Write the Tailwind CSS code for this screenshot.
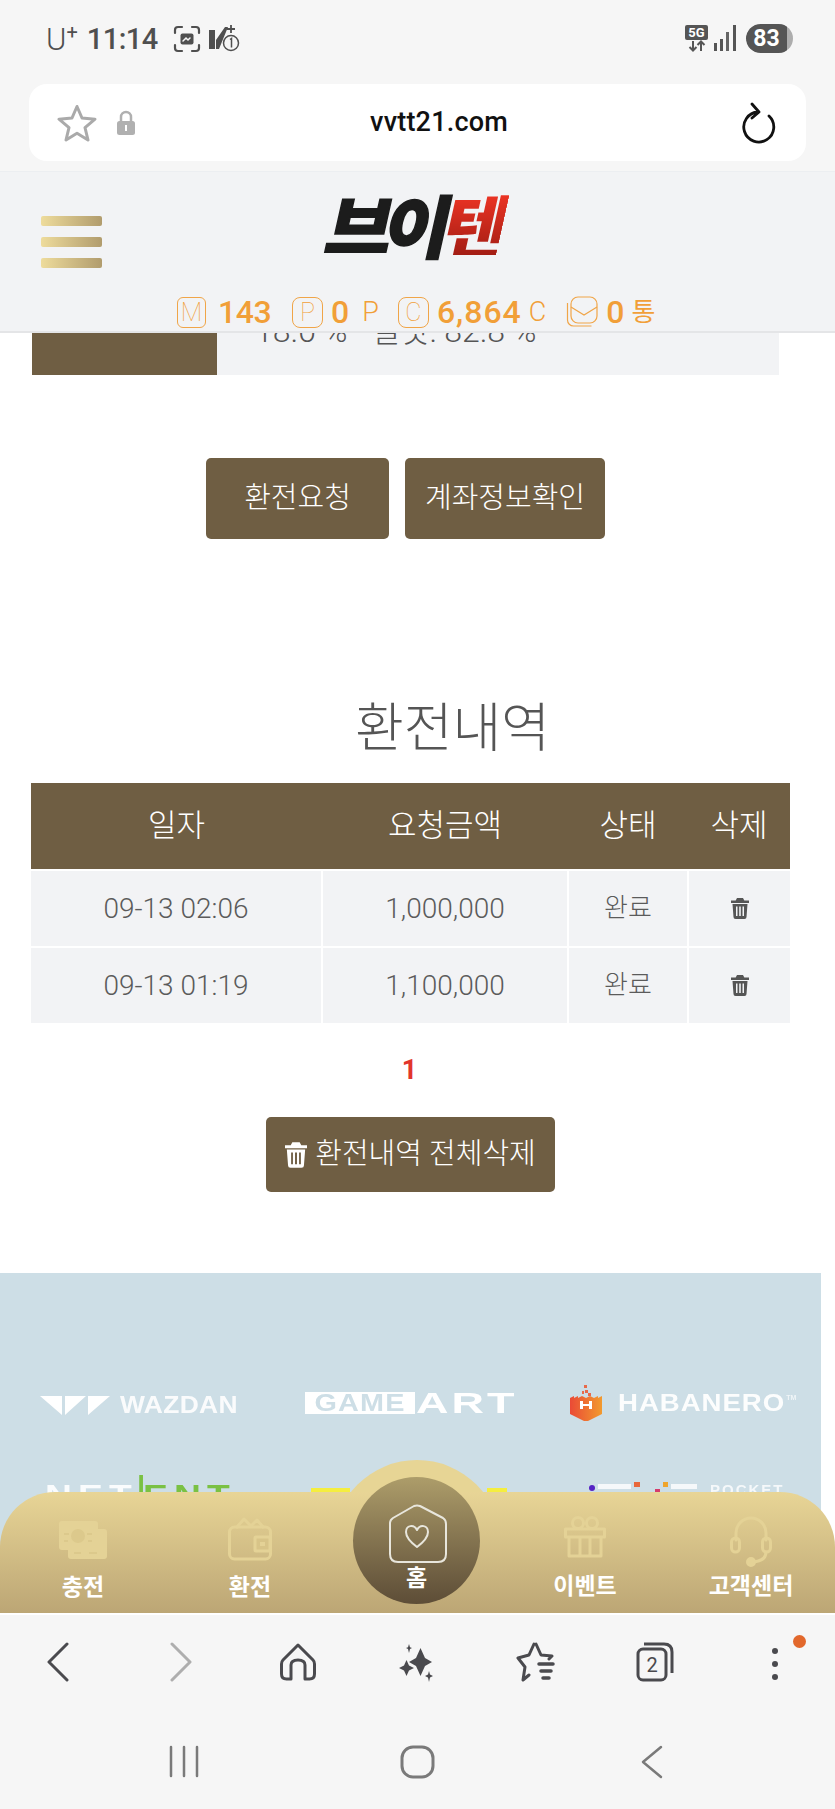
<!DOCTYPE html>
<html lang="ko">
<head>
    <meta charset="UTF-8">
    <meta name="viewport" content="width=device-width, initial-scale=1.0">
    <title>vvtt21.com</title>
    <script src="https://cdn.jsdelivr.net/npm/@tailwindcss/browser@4"></script>
</head>
<body class="bg-white font-['Roboto','Noto_Sans_CJK_KR',sans-serif]">
<div class="w-[835px] h-[1809px] flex flex-col overflow-hidden">

    <!-- Phone status bar + address bar -->
    <div class="h-[171px] shrink-0 bg-[#f6f6f6] flex flex-col">
        <div class="h-[84px] flex items-start justify-between pl-[46px] pr-[42px] pt-[23px] text-[#4f4f4f]">
            <div class="flex items-center h-[32px]">
                <span class="text-[31px] font-light leading-none">U</span>
                <span class="text-[20px] font-normal leading-none -mt-[14px]">+</span>
                <span class="ml-[9px] text-[29px] font-medium leading-none tracking-[-0.5px]">11:14</span>
                <svg class="ml-[15px]" width="28" height="28" viewBox="0 0 28 28" fill="none" stroke="#4f4f4f" stroke-width="2.2" stroke-linecap="round"><path d="M2 8V5a3 3 0 0 1 3-3h4M19 2h4a3 3 0 0 1 3 3v3M26 20v3a3 3 0 0 1-3 3h-4M9 26H5a3 3 0 0 1-3-3v-3"/><rect x="7.5" y="8.500" width="13" height="11" rx="2" fill="#4f4f4f" stroke="none"/><path d="M10 16l3-3 2 2 2-2" stroke="#f6f6f6" stroke-width="1.500"/></svg>
                <svg class="ml-[7px]" width="32" height="30" viewBox="0 0 32 30" fill="none"><path d="M1 6h6v19H1zM8 16L17 3h3L11 25H8z" fill="#4f4f4f"/><path d="M23 1v8M19 5h8" stroke="#4f4f4f" stroke-width="1.800"/><circle cx="23" cy="19" r="7.500" stroke="#4f4f4f" stroke-width="1.500" fill="#f6f6f6"/><path d="M22 15.500l1.500-1v9" stroke="#4f4f4f" stroke-width="1.500"/></svg>
            </div>
            <div class="flex items-center h-[30px] gap-[6px]">
                <div class="w-[23px] flex flex-col items-center">
                    <span class="w-[23px] h-[15px] bg-[#555] rounded-[2px] text-white text-[13px] font-bold leading-[15px] text-center">5G</span>
                    <svg width="18" height="12" viewBox="0 0 18 12" fill="none" stroke="#555" stroke-width="2"><path d="M5 1v9M1.500 7L5 10.500 8.500 7M13 11V2M9.500 5L13 1.500 16.500 5"/></svg>
                </div>
                <svg width="23" height="27" viewBox="0 0 23 27" fill="#555"><rect x="0" y="18" width="3" height="8"/><rect x="6" y="14" width="3" height="12"/><rect x="12" y="7" width="3" height="19" opacity=".9"/><rect x="19" y="0" width="3" height="26"/></svg>
                <div class="ml-[3px] w-[47px] h-[29px] rounded-full bg-[#adadad] overflow-hidden">
                    <div class="w-[41px] h-[29px] bg-[#555] text-white text-[23px] font-bold leading-[29px] text-center rounded-l-full">83</div>
                </div>
            </div>
        </div>
        <div class="mx-[29px] h-[77px] bg-white rounded-[18px] flex items-center pl-[28px] pr-[30px] relative">
            <svg width="40" height="38" viewBox="0 0 40 38" fill="none" stroke="#aaa" stroke-width="3" stroke-linejoin="round"><path d="M20 2.500l5 11.500 13 1.200-10 8.500 3 12.300-11-6.700-11 6.700 3-12.300-10-8.500 13-1.200z"/></svg>
            <svg class="ml-[19px]" width="20" height="26" viewBox="0 0 20 26"><path d="M5 12V7a5 5 0 0 1 10 0v5" fill="none" stroke="#b0b0b0" stroke-width="2.500"/><rect x="1" y="11" width="18" height="14" rx="2.500" fill="#b0b0b0"/><rect x="9" y="15" width="2" height="6" fill="#fff"/></svg>
            <span class="flex-1 text-center text-[27px] font-medium text-[#111] pl-[2px] tracking-[0.2px]">vvtt21.com</span>
            <svg width="36" height="42" viewBox="0 0 36 42" fill="none" stroke="#111" stroke-width="2.800" stroke-linecap="round" stroke-linejoin="round"><path d="M18 10A15 15 0 1 0 29 14M12 2l7 8-7 6"/></svg>
        </div>
    </div>

    <!-- Site header -->
    <header class="h-[162px] shrink-0 bg-[#f2f3f5] relative z-10 border-t border-[#eceef1] border-b-2 border-b-[#e4e5e7]">
        <div class="h-[124px] relative">
            <div class="absolute left-[41px] top-[44px] w-[61px] flex flex-col gap-[11px]">
                <div class="h-[10px] rounded-[2px] bg-gradient-to-r from-[#eedc9c] to-[#b19c6d]"></div>
                <div class="h-[10px] rounded-[2px] bg-gradient-to-r from-[#eedc9c] to-[#b19c6d]"></div>
                <div class="h-[10px] rounded-[2px] bg-gradient-to-r from-[#eedc9c] to-[#b19c6d]"></div>
            </div>
            <div class="absolute left-[322px] top-[19px] w-[188px] h-[66px] flex items-center justify-center -skew-x-12 scale-y-[0.95] text-[72px] leading-[66px] font-black tracking-[-8px] font-['Noto_Sans_CJK_KR',sans-serif] whitespace-nowrap">
                <span class="text-[#1c1c1c] [-webkit-text-stroke:1.5px_#1c1c1c]">브이</span><span class="bg-gradient-to-b from-[#ee3424] to-[#a31d14] bg-clip-text text-transparent">텐</span>
            </div>
        </div>
        <div class="flex items-center pl-[177px] h-[32px] text-[#f19f38] text-[32px] leading-none whitespace-nowrap">
            <span class="w-[29px] h-[31px] border border-[#f0a548] rounded-[6px] flex items-center justify-center text-[25px] font-thin">M</span>
            <span class="ml-[12px] font-medium tracking-[-0.5px]">143</span>
            <span class="ml-[21px] w-[31px] h-[31px] border border-[#f0a548] rounded-[8px] flex items-center justify-center text-[25px] font-thin">P</span>
            <span class="ml-[8px] font-medium">0</span>
            <span class="ml-[13px] text-[27px] font-light">P</span>
            <span class="ml-[19px] w-[31px] h-[31px] border border-[#f0a548] rounded-[8px] flex items-center justify-center text-[25px] font-thin">C</span>
            <span class="ml-[8px] font-medium tracking-[1px]">6,864</span>
            <span class="ml-[7px] text-[27px] font-light">C</span>
            <svg class="ml-[20px]" width="32" height="32" viewBox="0 0 32 32" fill="none" stroke="#f0a548" stroke-width="1.200"><rect x="5" y="1" width="26" height="26" rx="7"/><path d="M5 11l13 8 13-8"/><path d="M1.500 7v17a6 6 0 0 0 6 6h18"/></svg>
            <span class="ml-[8px] font-medium">0</span>
            <span class="ml-[7px] text-[26px] font-normal">통</span>
        </div>
    </header>

    <!-- Page content -->
    <main class="relative flex-1 overflow-hidden">
        <div class="ml-[32px] w-[747px] h-[42px] flex bg-[#f2f3f5]">
            <div class="w-[185px] bg-[#6f5e43]"></div>
            <div class="pl-[38px] -mt-[20px] text-[#555] text-[32px] leading-[36px] font-light whitespace-pre">18.0 %   일샷: 82.8 %</div>
        </div>

        <div class="mt-[83px] ml-[206px] flex gap-[16px]">
            <button class="w-[183px] h-[81px] rounded-[5px] bg-[#6f5e43] text-white text-[29px] font-light">환전요청</button>
            <button class="w-[200px] h-[81px] rounded-[5px] bg-[#6f5e43] text-white text-[29px] font-light">계좌정보확인</button>
        </div>

        <h2 class="mt-[160px] ml-[355px] h-[60px] text-[53px] leading-[60px] font-light text-[#555] whitespace-nowrap">환전내역</h2>

        <table class="mt-[24px] ml-[31px] w-[759px] table-fixed border-collapse text-center">
            <thead>
                <tr class="h-[87px] bg-[#6f5e43] text-white text-[31px] font-light">
                    <th class="w-[291px] font-light">일자</th>
                    <th class="w-[246px] font-light">요청금액</th>
                    <th class="w-[120px] font-light">상태</th>
                    <th class="w-[102px] font-light">삭제</th>
                </tr>
            </thead>
            <tbody class="text-[28px] font-light text-[#5b5b5b]">
                <tr class="h-[77px] bg-[#f2f3f5]">
                    <td class="border-2 border-white border-l-0">09-13 02:06</td>
                    <td class="border-2 border-white">1,000,000</td>
                    <td class="border-2 border-white text-[26px]">완료</td>
                    <td class="border-2 border-white border-r-0">
                        <svg class="mx-auto" width="18" height="21" viewBox="0 0 18 21" fill="#555"><path d="M6 0h6l1.300 2.500H18v2.500H0V2.500h4.700zM1.500 6h15l-1 13a2 2 0 0 1-2 2h-9a2 2 0 0 1-2-2zM5 8.500v9.500h1.500V8.500zM8.200 8.500v9.500h1.600V8.500zM11.500 8.500v9.500H13V8.500z" fill-rule="evenodd"/></svg>
                    </td>
                </tr>
                <tr class="h-[76px] bg-[#f2f3f5]">
                    <td class="border-2 border-white border-l-0 border-b-0">09-13 01:19</td>
                    <td class="border-2 border-white border-b-0">1,100,000</td>
                    <td class="border-2 border-white border-b-0 text-[26px]">완료</td>
                    <td class="border-2 border-white border-r-0 border-b-0">
                        <svg class="mx-auto" width="18" height="21" viewBox="0 0 18 21" fill="#555"><path d="M6 0h6l1.300 2.500H18v2.500H0V2.500h4.700zM1.500 6h15l-1 13a2 2 0 0 1-2 2h-9a2 2 0 0 1-2-2zM5 8.500v9.500h1.500V8.500zM8.200 8.500v9.500h1.600V8.500zM11.500 8.500v9.500H13V8.500z" fill-rule="evenodd"/></svg>
                    </td>
                </tr>
            </tbody>
        </table>

        <div class="mt-[32px] ml-[31px] w-[757px] h-[30px] text-center text-[#e2352b] text-[27px] leading-[30px] font-bold">1</div>

        <button class="mt-[32px] ml-[266px] w-[289px] h-[75px] rounded-[5px] bg-[#6f5e43] text-white text-[29px] font-light flex items-center justify-center gap-[8px]">
            <svg width="22" height="26" viewBox="0 0 18 21" fill="#fff"><path d="M6 0h6l1.300 2.500H18v2.500H0V2.500h4.700zM1.500 6h15l-1 13a2 2 0 0 1-2 2h-9a2 2 0 0 1-2-2zM5 8.500v9.500h1.500V8.500zM8.200 8.500v9.500h1.600V8.500zM11.500 8.500v9.500H13V8.500z" fill-rule="evenodd"/></svg>
            <span class="whitespace-nowrap">환전내역 전체삭제</span>
        </button>

        <!-- Game provider banner -->
        <section class="mt-[81px] w-[821px] h-[347px] bg-[#cddee6] relative overflow-hidden text-white font-['Liberation_Sans',sans-serif]">
            <div class="absolute left-[40px] top-[120px] flex items-center">
                <svg width="70" height="19" viewBox="0 0 70 19" fill="#fff"><path d="M0 0h22v19zM25 19V0h21zM48 19V0h22z"/></svg>
                <span class="ml-[10px] text-[24px] font-bold leading-none tracking-[0.3px] scale-x-[1.1] origin-left opacity-90">WAZDAN</span>
            </div>
            <div class="absolute left-[305px] top-[119px] flex items-center h-[22px]">
                <span class="w-[110px] h-[22px] bg-white text-[#cddee6] text-[24px] leading-[22px] font-bold text-center tracking-[1px]"><span class="inline-block scale-x-[1.2]">GAME</span></span>
                <span class="ml-[1px] text-[29px] font-bold leading-none tracking-[2px] scale-x-[1.55] origin-left">ART</span>
            </div>
            <div class="absolute left-[570px] top-[112px] flex items-center">
                <svg width="32" height="36" viewBox="0 0 32 36"><defs><linearGradient id="hab" x1="0" x2="1"><stop offset="0" stop-color="#ea4a36"/><stop offset="1" stop-color="#f29a2e"/></linearGradient></defs><path d="M0 13l4-2v2l4-2v2l4-2 4 2 4-2 4 2 4-2v2l4-2v18l-16 8-16-8z" fill="url(#hab)"/><path d="M10 16h3v3h6v-3h3v8h-3v-3h-6v3h-3z" fill="#fff"/><path d="M14 0h3v3h-3zM15 5h3v3h-3zM12 6h2v3h-2zM18 8h3v3h-3z" fill="#e86a4a"/></svg>
                <span class="ml-[16px] text-[23px] font-bold leading-none tracking-[0.8px] scale-x-[1.2] origin-left whitespace-nowrap opacity-95">HABANERO</span>
                <span class="ml-[29px] text-[7px] font-bold opacity-70 -mt-[10px]">TM</span>
            </div>
            <div class="absolute left-[45px] top-[207px] flex items-start text-[30px] font-bold leading-none tracking-[5px] whitespace-nowrap scale-x-[1.24] origin-left">
                <span class="opacity-90">NET</span><span class="text-[#7ac143] ml-[1px] border-l-[3px] border-[#7ac143] -mt-[5px] pt-[5px]">ENT</span>
            </div>
            <div class="absolute left-[311px] top-[215px] w-[39px] h-[10px] bg-[#f5ee3f]"></div>
            <div class="absolute left-[487px] top-[215px] w-[20px] h-[10px] bg-[#f5ee3f]"></div>
            <div class="absolute left-[589px] top-[209px] flex items-start gap-[3px]">
                <span class="w-[6px] h-[6px] mt-[3px] rounded-full bg-[#5523c4]"></span>
                <span class="w-[33px] h-[5px] mt-[2px] bg-white/80"></span>
                <span class="w-[6px] h-[5px] bg-[#e8673a]"></span>
                <span class="ml-[12px] w-[5px] h-[4px] mt-[7px] bg-[#d53c6c]"></span>
                <span class="w-[5px] h-[5px] bg-[#efa52c]"></span>
                <span class="w-[26px] h-[5px] mt-[2px] bg-white/80"></span>
                <span class="ml-[10px] text-[15px] font-bold tracking-[2px] leading-none opacity-80">POCKET</span>
            </div>
        </section>

        <!-- Bottom nav, floats over the page -->
        <nav class="absolute left-0 bottom-0 w-[835px] h-[153px]">
            <div class="absolute left-[333px] top-0 w-[168px] h-[168px] rounded-full bg-[#e7d595]"></div>
            <div class="absolute left-0 top-[32px] w-[835px] h-[121px] rounded-t-[55px] bg-gradient-to-b from-[#e8d596] to-[#bca675]"></div>
            <div class="absolute left-[353px] top-[17px] w-[127px] h-[127px] rounded-full bg-gradient-to-b from-[#ad9d6a] to-[#5d4d37]"></div>
            <svg class="absolute left-[388px] top-[44px]" width="60" height="60" viewBox="0 0 60 60" fill="none" stroke="#e8e6dc" stroke-width="2" stroke-linejoin="round"><path d="M2 19Q2 16 5 14L26 2Q29 1 32 2L55 14Q58 16 58 20V50Q58 58 50 58H10Q2 58 2 50Z"/><path d="M29 43C21 37 18 33 18 28c0-7 8-8 11-2 3-6 11-5 11 2 0 5-3 9-11 15z"/></svg>
            <div class="absolute left-[353px] top-[104px] w-[127px] text-center text-white text-[23px] font-bold leading-[30px]">홈</div>

            <div class="absolute top-[61px] left-0 w-[835px] text-white text-[23px] font-bold">
                <div class="absolute left-[33px] w-[100px] flex flex-col items-center">
                    <svg width="48" height="38" viewBox="0 0 48 38" fill="#e4d296"><path d="M3 0h33a3 3 0 0 1 3 3v5h6a3 3 0 0 1 3 3v24a3 3 0 0 1-3 3H12a3 3 0 0 1-3-3v-6H3a3 3 0 0 1-3-3V3a3 3 0 0 1 3-3z"/><circle cx="19" cy="15" r="7" fill="#dcc98c"/><path d="M5 13h5M28 13h5M5 20h4M29 20h4M15 32h7M30 32h8" stroke="#dcc98c" stroke-width="2"/></svg>
                    <span class="mt-[14px] leading-[30px]">충전</span>
                </div>
                <div class="absolute left-[200px] w-[100px] flex flex-col items-center -mt-[4px]">
                    <svg width="44" height="44" viewBox="0 0 44 44" fill="none" stroke="#e4d296" stroke-width="3" stroke-linejoin="round"><path d="M8 11L16 2l7 7 6-6 7 8"/><rect x="1.500" y="10" width="41" height="32" rx="5"/><rect x="27" y="20" width="15" height="14" rx="1" fill="#d8c488"/><rect x="32" y="25" width="5" height="4" fill="#e4d296" stroke="none"/></svg>
                    <span class="mt-[12px] leading-[30px]">환전</span>
                </div>
                <div class="absolute left-[535px] w-[100px] flex flex-col items-center -mt-[5px]">
                    <svg width="42" height="42" viewBox="0 0 42 42" fill="none" stroke="#e4d296" stroke-width="3" stroke-linejoin="round"><circle cx="14" cy="7" r="5.500"/><circle cx="28" cy="7" r="5.500"/><rect x="1.500" y="13" width="39" height="8"/><path d="M5 21v19h32V21M16 21v19M26 21v19"/></svg>
                    <span class="mt-[14px] leading-[30px]">이벤트</span>
                </div>
                <div class="absolute left-[701px] w-[100px] flex flex-col items-center -mt-[5px]">
                    <svg width="42" height="51" viewBox="0 0 42 51" fill="none" stroke="#e4d296" stroke-width="3" stroke-linecap="round"><path d="M6 24V17a15 15 0 0 1 30 0v7"/><rect x="1.500" y="22" width="8" height="14" rx="4"/><rect x="32.500" y="22" width="8" height="14" rx="4"/><path d="M36 36q0 9-13 10"/><circle cx="21" cy="46" r="3.500" fill="#e4d296"/></svg>
                    <span class="mt-[5px] leading-[30px] whitespace-nowrap">고객센터</span>
                </div>
            </div>
        </nav>
    </main>

    <!-- Browser toolbar + android nav -->
    <div class="h-[196px] shrink-0 bg-[#f6f6f6] border-t-2 border-white relative">
        <div class="h-[100px] relative">
            <svg class="absolute left-[47px] top-[27px]" width="22" height="40" viewBox="0 0 22 40" fill="none" stroke="#4a4a4e" stroke-width="3" stroke-linecap="round" stroke-linejoin="round"><path d="M20 2L2 20l18 18"/></svg>
            <svg class="absolute left-[170px] top-[27px]" width="22" height="40" viewBox="0 0 22 40" fill="none" stroke="#aeaeae" stroke-width="3" stroke-linecap="round" stroke-linejoin="round"><path d="M2 2l18 18L2 38"/></svg>
            <svg class="absolute left-[280px] top-[28px]" width="36" height="38" viewBox="0 0 36 38" fill="none" stroke="#4a4a4e" stroke-width="3" stroke-linejoin="round"><path d="M18 2L3 17q-1.500 1.500-1.500 4v10q0 5 5 5h4.500V22q0-5 7-5t7 5v14h4.500q5 0 5-5V21q0-2.500-1.500-4z"/></svg>
            <svg class="absolute left-[399px] top-[29px]" width="36" height="38" viewBox="0 0 36 38" fill="#4a4a4e"><path d="M21.500 4L26 14l7 4-7 4-4.500 10-4.500-10-7-4 7-4zM7.500 16l2.500 5.500 5 2.500-5 2.500-2.500 5.500-2.500-5.500L0 24l5-2.500zM10 0l1 3.200L13 4l-2 1L10 9 9 5 7 4l2-.8zM30 27l1 3.500 3 1.500-3 1.500-1 4.500-1-4.500-3-1.500 3-1.500z"/></svg>
            <svg class="absolute left-[516px] top-[27px]" width="40" height="40" viewBox="0 0 40 40" fill="none" stroke="#4a4a4e" stroke-width="3" stroke-linejoin="round" stroke-linecap="round"><path d="M20 2l5 11 11 1-3 3M13 33l-6 5 2-13-7-9 11-3 5-11"/><path d="M23 22h14M25 29h10M27 36h6" stroke-width="3.500"/></svg>
            <svg class="absolute left-[636px] top-[27px]" width="38" height="40" viewBox="0 0 38 40" fill="none" stroke="#4a4a4e" stroke-width="3"><rect x="2" y="7" width="28" height="31" rx="5"/><path d="M8 2h20q8 0 8 8v21"/><text x="16" y="30" text-anchor="middle" font-family="Roboto" font-size="20" fill="#4a4a4e" stroke="none">2</text></svg>
            <div class="absolute left-[772px] top-[33px] flex flex-col gap-[7px]">
                <span class="w-[6px] h-[6px] rounded-full bg-[#4a4a4e]"></span>
                <span class="w-[6px] h-[6px] rounded-full bg-[#4a4a4e]"></span>
                <span class="w-[6px] h-[6px] rounded-full bg-[#4a4a4e]"></span>
            </div>
            <span class="absolute left-[793px] top-[20px] w-[13px] h-[13px] rounded-full bg-[#e2682c]"></span>
        </div>
        <div class="h-[94px] relative">
            <svg class="absolute left-[168px] top-[30px]" width="32" height="33" viewBox="0 0 32 33" fill="none" stroke="#7a7a7a" stroke-width="2.500" stroke-linecap="round"><path d="M3 2v29M16 2v29M29 2v29"/></svg>
            <svg class="absolute left-[400px] top-[30px]" width="35" height="34" viewBox="0 0 35 34" fill="none" stroke="#7a7a7a" stroke-width="3"><rect x="2" y="2" width="31" height="30" rx="11"/></svg>
            <svg class="absolute left-[641px] top-[30px]" width="22" height="34" viewBox="0 0 22 34" fill="none" stroke="#7a7a7a" stroke-width="2.500" stroke-linecap="round" stroke-linejoin="round"><path d="M20 2L2 17l18 15"/></svg>
        </div>
    </div>
</div>
</body>
</html>
